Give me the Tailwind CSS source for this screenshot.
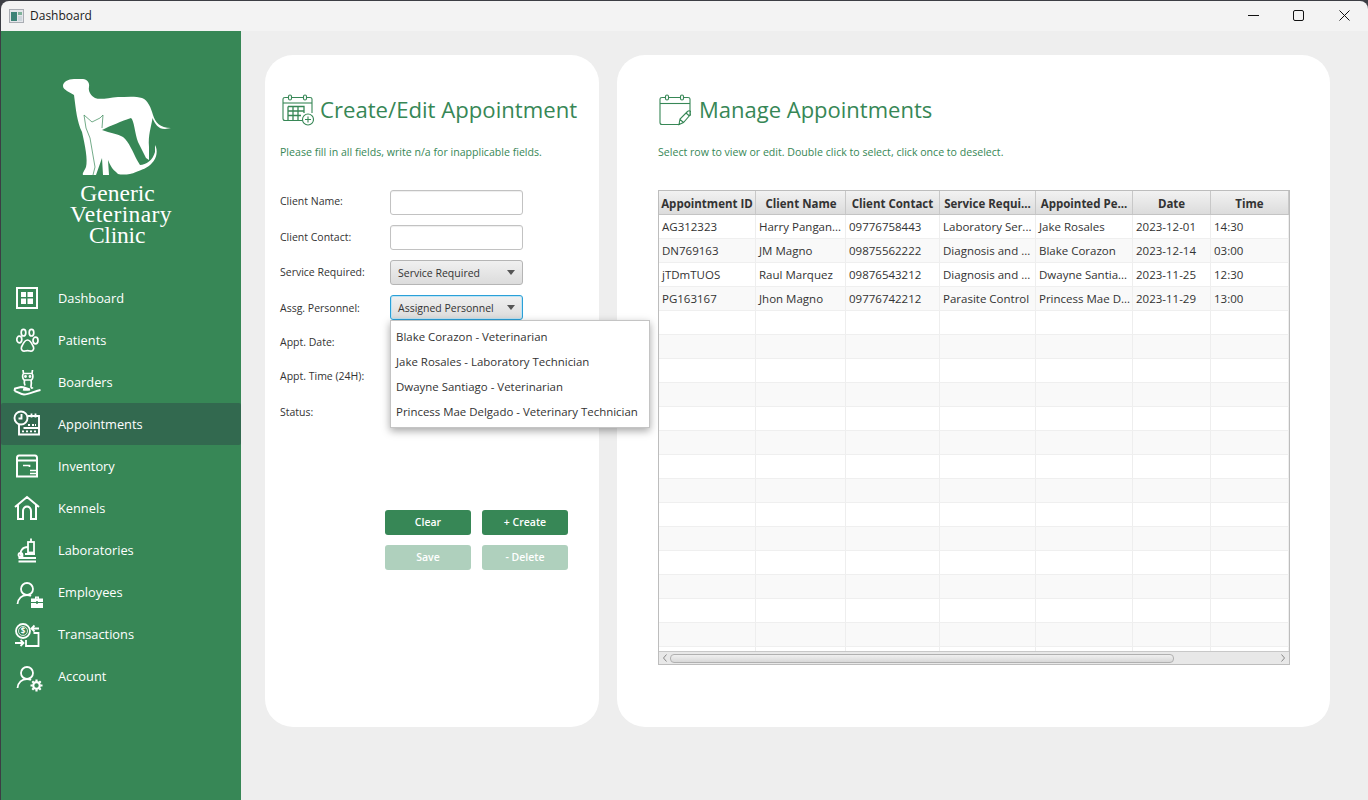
<!DOCTYPE html>
<html>
<head>
<meta charset="utf-8">
<title>Dashboard</title>
<script src="https://cdn.jsdelivr.net/npm/@tailwindcss/browser@4"></script>
</head>
<body class="w-[1368px] h-[800px] overflow-hidden bg-[#3c3e44] font-['Open_Sans',sans-serif]">
<div class="h-[800px] pt-px pl-px flex flex-col">
  <header class="h-[30px] shrink-0 bg-[#f3f3f3] rounded-tl-lg rounded-tr-lg flex items-center text-[12px] text-[#1a1a1a]">
    <svg class="ml-[8px] mr-[6px]" width="15" height="14" viewBox="0 0 15 14"><rect x=".5" y=".5" width="14" height="13" fill="#e4e6ea" stroke="#a9adb3"/><rect x="2" y="3" width="6" height="9" fill="#3d8377"/><rect x="9" y="3" width="4" height="3" fill="#7fb29a"/><rect x="9" y="7" width="4" height="5" fill="#cdd6dc"/></svg>
    <span>Dashboard</span>
    <div class="ml-auto flex items-center gap-[34px] pr-[18px] pb-[2px]">
      <svg width="11" height="11" viewBox="0 0 11 11"><path d="M0 5.500H11" stroke="#111" stroke-width="1"/></svg>
      <svg width="11" height="11" viewBox="0 0 11 11"><rect x=".5" y=".5" width="10" height="10" rx="1.500" fill="none" stroke="#111"/></svg>
      <svg width="11" height="11" viewBox="0 0 11 11" class="ml-px"><path d="M.5 .5L10.500 10.500M10.500 .5L.5 10.500" stroke="#111"/></svg>
    </div>
  </header>
  <div class="flex flex-1 min-h-0">
    <aside class="w-[240px] shrink-0 bg-[#378756] text-white">
      <div class="h-[246px] flex flex-col items-center relative">
        <svg class="mt-[47px] ml-[-6px]" width="112" height="100" viewBox="62 78 112 100">
          <path fill="#fff" d="M63 86C63 82 68 79 74 79L83 79C87 79 90 83 89 87C88 91 91 96 95 98C100 100 108 98 118 97C126 97 136 96 142 98C148 100 151 108 153 115C155 122 160 128 171 128L165 129C158 129 155 124 152.500 118C151 128 148 135 149 147L149 160L146 158L138 142C135 134 134 120 131 118C122 121 110 126 102 130C110 133 118 134 123 137C129 142 133 152 137 160L140 165C146 165 153 160 155 152L155 145C158 150 157 158 152 163C148 168 141 170 136 172C130 175 122 175 118 174L116 172C113 170 110 165 108 160L109 175L103 175L102 158L96 175L88 175L83 175C82 173 85 170 86 167C88 160 85 145 82 132C77 122 76 110 74 95C70 92 63 90 63 86Z"/>
          <path fill="none" stroke="#378756" stroke-width=".7" d="M84 115L92 122L100 118L103 115L102 128M84 115L86 128L90 138L95 167L93 175"/>
        </svg>
        <div class="font-['Liberation_Serif',serif] text-[23.500px] leading-[21px] text-center mt-[5px] font-light flex flex-col items-center">
          <span class="pr-[7px]">Generic</span>
          <span class="tracking-[0.4px]">Veterinary</span>
          <span class="pr-[8px] tracking-[-0.2px]">Clinic</span>
        </div>
      </div>
      <nav class="text-[12.800px] text-white">
        <a class="h-[42px] flex items-center gap-[13px] pl-[10px]">
          <svg class="shrink-0 overflow-visible" width="34" height="32" viewBox="0 0 34 32" fill="none" stroke="#fff" stroke-width="2"><rect x="6" y="6" width="20" height="20"/><path fill="#fff" stroke="none" d="M10 10H15V15H10ZM16.500 10H22V15H16.500ZM10 16.500H15V22H10ZM16.500 16.500H22V22H16.500Z"/></svg>
          <span class="mt-[2px]">Dashboard</span></a>
        <a class="h-[42px] flex items-center gap-[13px] pl-[10px]">
          <svg class="shrink-0 overflow-visible" width="34" height="32" viewBox="0 0 34 32" fill="none" stroke="#fff" stroke-width="1.700"><ellipse cx="12.500" cy="8.700" rx="2.300" ry="3.300"/><ellipse cx="20.500" cy="8.700" rx="2.300" ry="3.300"/><ellipse cx="8.300" cy="15.500" rx="2.500" ry="3.300"/><ellipse cx="24.500" cy="16.500" rx="2.500" ry="3.300"/><path d="M16.500 16C13.500 16 12 20 10.500 23C9.500 26 12 27.500 14 27C15.800 26.500 17.500 26.500 19 27C21 27.500 23.500 26 22.500 23C21 20 19.500 16 16.500 16Z"/></svg>
          <span class="mt-[2px]">Patients</span></a>
        <a class="h-[42px] flex items-center gap-[13px] pl-[10px]">
          <svg class="shrink-0 overflow-visible" width="34" height="32" viewBox="0 0 34 32" fill="none" stroke="#fff" stroke-width="1.700"><path d="M12 4L12.500 7.500H21L21.500 4M12.500 7.500C11 9 11.500 13 13 14H20.500C22 13 22.500 9 21 7.500M13.500 14C13 16 13.500 18 14 19.500M20 14C20.500 16 20.500 18 20 20.500C20 22 21 22.500 22 21.500"/><circle cx="14.500" cy="10.500" r=".6" fill="#fff"/><circle cx="19" cy="10.500" r=".6" fill="#fff"/><path stroke-width="2" d="M3.500 25L4 22.500L10 21C13 21 16 23 19 23.500C16 24 14 24 12 23.500M3.500 25C7 26 10 28.500 13 28.500C18 28.500 24 25 29.500 24"/></svg>
          <span class="mt-[2px]">Boarders</span></a>
        <a class="h-[42px] flex items-center gap-[13px] pl-[10px] bg-[#32694f] rounded-[2px]">
          <svg class="shrink-0 overflow-visible" width="34" height="32" viewBox="0 0 34 32" fill="none" stroke="#fff" stroke-width="1.900"><circle cx="10" cy="10" r="6.500"/><path d="M10.500 6V10.500H7.500"/><path d="M17 8H28V26.500H8V17M12.500 20H28"/><path stroke-width="1.800" d="M20.500 5.500V9.500M24.500 5.500V9.500"/><path fill="#fff" stroke="none" d="M11 22.500h2v1.800h-2zM15 22.500h2v1.800h-2zM19 22.500h2v1.800h-2zM23 22.500h2v1.800h-2zM23 18h-2v-2h2zM19 18h-2v-2h2zM25 18h-1v-2h1z"/></svg>
          <span class="mt-[2px]">Appointments</span></a>
        <a class="h-[42px] flex items-center gap-[13px] pl-[10px]">
          <svg class="shrink-0 overflow-visible" width="34" height="32" viewBox="0 0 34 32" fill="none" stroke="#fff" stroke-width="2"><path d="M6 26.500V8C6 6.500 7 5.500 8 5.500H24C25 5.500 26 6.500 26 8V26.500ZM6 10.500H26"/><path stroke-width="1.700" d="M12 15.500H18.500V17M19 20.500H25M19 23.500H25"/></svg>
          <span class="mt-[2px]">Inventory</span></a>
        <a class="h-[42px] flex items-center gap-[13px] pl-[10px]">
          <svg class="shrink-0 overflow-visible" width="34" height="32" viewBox="0 0 34 32" fill="none" stroke="#fff" stroke-width="2"><path d="M4 15L16 5L28 15M7 13V27H12V19C12 16 14 14.500 16 14.500C18 14.500 20 16 20 19V27H25V13"/></svg>
          <span class="mt-[2px]">Kennels</span></a>
        <a class="h-[42px] flex items-center gap-[13px] pl-[10px]">
          <svg class="shrink-0 overflow-visible" width="34" height="32" viewBox="0 0 34 32" fill="none" stroke="#fff" stroke-width="1.800"><path d="M7.500 27.500H25M7.500 24H25M13 24C9.500 23 8.500 18 11 15.500C12.500 13.500 15 13 17 13M14 20H24"/><circle cx="9.500" cy="21" r="2"/><rect x="17" y="8" width="6" height="10.500"/><path d="M20 8V4.500"/></svg>
          <span class="mt-[2px]">Laboratories</span></a>
        <a class="h-[42px] flex items-center gap-[13px] pl-[10px]">
          <svg class="shrink-0 overflow-visible" width="34" height="32" viewBox="0 0 34 32" fill="none" stroke="#fff" stroke-width="1.800"><circle cx="16" cy="13" r="6"/><path d="M6.500 28C7 22.500 11 19 16 19C17.500 19 19 19.300 20 20"/><path fill="#fff" stroke="none" d="M20 22.500H24V20.500H28V22.500H32V32H20ZM25.500 22.500H26.500V21.800H25.500Z"/><path stroke="#378756" stroke-width="1" d="M20 26.500H25M27 26.500H32M25.500 25.500H26.500V27.500H25.500Z"/></svg>
          <span class="mt-[2px]">Employees</span></a>
        <a class="h-[42px] flex items-center gap-[13px] pl-[10px]">
          <svg class="shrink-0 overflow-visible" width="34" height="32" viewBox="0 0 34 32" fill="none" stroke="#fff" stroke-width="1.800"><circle cx="12" cy="13" r="7"/><circle cx="12" cy="13" r="4.500" stroke-width=".8"/><text x="12" y="16" font-size="8" font-weight="700" text-anchor="middle" fill="#fff" stroke="none" font-family="Open Sans">$</text><path d="M21 10.500H28M23.500 7.500L20.500 10.500L23.500 13.500"/><path d="M4 25H12M9.500 22L12.500 25L9.500 28"/><path d="M15 22V28H27.500V15H22.500"/></svg>
          <span class="mt-[2px]">Transactions</span></a>
        <a class="h-[42px] flex items-center gap-[13px] pl-[10px]">
          <svg class="shrink-0 overflow-visible" width="34" height="32" viewBox="0 0 34 32" fill="none" stroke="#fff" stroke-width="1.800"><circle cx="16" cy="13" r="6"/><path d="M6.500 28C7 22.500 11 19 16 19C17.500 19 19 19.300 20 20"/><circle cx="25.500" cy="25.500" r="3.300" stroke-width="2.200"/><path stroke-width="2.200" d="M25.500 19.500V21.500M25.500 29.500V31.500M19.500 25.500H21.500M29.500 25.500H31.500M21.300 21.300L22.700 22.700M28.300 28.300L29.700 29.700M29.700 21.300L28.300 22.700M22.700 28.300L21.300 29.700"/></svg>
          <span class="mt-[2px]">Account</span></a>
      </nav>
    </aside>
    <main class="flex-1 bg-[#eeeeee] pt-[24px] pl-[24px] flex gap-[18px] items-start">
      <section class="relative w-[334px] h-[672px] bg-white rounded-[28px] pl-[15px]">
        <div class="flex items-center h-[32px] mt-[39px] pl-[2px]">
          <svg width="32" height="32" viewBox="0 0 32 32" fill="none" stroke="#378756" stroke-width="1.100"><path d="M24 26.500H3C2 26.500 1 25.500 1 24.500V5C1 4 2 3.500 3 3.500H28C29.500 3.500 30 4 30 5V19"/><path d="M1 9H30"/><rect x="6.500" y="1" width="3" height="5" rx="1.500" fill="#fff"/><rect x="21.500" y="1" width="3" height="5" rx="1.500" fill="#fff"/><path stroke-width="1.300" d="M6 12.500H22V19M6 17H22M6 21.500H19M6 12.500V26M11 12.500V26M16 12.500V26"/><circle cx="26" cy="25.500" r="5.500" fill="#fff"/><path d="M26 22.500V28.500M23 25.500H29"/></svg>
          <h1 class="text-[22.150px] text-[#378756] ml-[6px] leading-none -mt-[2px]">Create/Edit Appointment</h1>
        </div>
        <p class="text-[10.600px] text-[#378756] mt-[19px] leading-[14px]">Please fill in all fields, write n/a for inapplicable fields.</p>
        <form class="mt-[31px] flex flex-col gap-[10px] text-[10.500px] text-[#333]">
          <div class="flex items-center h-[25px]"><label class="w-[110px] -mt-px">Client Name:</label><div class="w-[133px] h-[25px] rounded-[3px] border border-[#c2c2c2] bg-white shadow-[inset_0_1px_1px_#eee]"></div></div>
          <div class="flex items-center h-[25px]"><label class="w-[110px]">Client Contact:</label><div class="w-[133px] h-[25px] rounded-[3px] border border-[#c2c2c2] bg-white shadow-[inset_0_1px_1px_#eee]"></div></div>
          <div class="flex items-center h-[25px]"><label class="w-[110px]">Service Required:</label><div class="w-[133px] h-[25px] rounded-[3px] border border-[#b5b5b5] bg-gradient-to-b from-[#f0f0f0] to-[#dcdcdc] flex items-center pl-[7px] pr-[7px] justify-between"><span class="mt-[2px]">Service Required</span><span class="border-t-[5px] border-t-[#555] border-x-[4.500px] border-x-transparent"></span></div></div>
          <div class="flex items-center h-[25px]"><label class="w-[110px] mt-[2px]">Assg. Personnel:</label><div class="w-[133px] h-[25px] rounded-[3px] border border-[#2aa0d8] shadow-[inset_0_0_0_1px_#bfe3f3] bg-gradient-to-b from-[#f0f0f0] to-[#dcdcdc] flex items-center pl-[7px] pr-[7px] justify-between"><span class="mt-[2px]">Assigned Personnel</span><span class="border-t-[5px] border-t-[#555] border-x-[4.500px] border-x-transparent"></span></div></div>
          <div class="flex items-center h-[25px]"><label class="w-[110px]">Appt. Date:</label></div>
          <div class="flex items-center h-[25px]"><label class="w-[110px] -mt-[2px]">Appt. Time (24H):</label></div>
          <div class="flex items-center h-[25px]"><label class="w-[110px]">Status:</label></div>
        </form>
        <div class="ml-[105px] mt-[85px] grid grid-cols-[86px_86px] gap-x-[11px] gap-y-[10px] text-[10.500px] font-semibold text-white">
          <button class="h-[25px] rounded-[3px] bg-[#378756]">Clear</button>
          <button class="h-[25px] rounded-[3px] bg-[#378756]">+ Create</button>
          <button class="h-[25px] rounded-[3px] bg-[#afd0bd]">Save</button>
          <button class="h-[25px] rounded-[3px] bg-[#afd0bd]">- Delete</button>
        </div>
        <ul class="absolute left-[125px] top-[265px] w-[260px] h-[108px] bg-white border border-[#c4c4c4] shadow-[0_3px_8px_rgba(0,0,0,0.35)] pt-[3px] text-[11.450px] text-[#333] z-10">
          <li class="h-[25px] leading-[25px] pl-[5px]">Blake Corazon - Veterinarian</li>
          <li class="h-[25px] leading-[25px] pl-[5px]">Jake Rosales - Laboratory Technician</li>
          <li class="h-[25px] leading-[25px] pl-[5px]">Dwayne Santiago - Veterinarian</li>
          <li class="h-[25px] leading-[25px] pl-[5px]">Princess Mae Delgado - Veterinary Technician</li>
        </ul>
      </section>
      <section class="w-[713px] h-[672px] bg-white rounded-[28px] pl-[41px]">
        <div class="flex items-center h-[32px] mt-[39px] pl-px">
          <svg width="32" height="32" viewBox="0 0 32 32" fill="none" stroke="#378756" stroke-width="1.100"><path d="M21 30.500H3C2 30.500 1 29.500 1 28.500V5C1 4 2 3.500 3 3.500H29C30 3.500 31 4 31 5V22"/><path d="M1 9.500H31"/><rect x="6.500" y="1" width="3" height="5" rx="1.500" fill="#fff"/><rect x="21.500" y="1" width="3" height="5" rx="1.500" fill="#fff"/><path d="M20 30.500L21 25L28.500 17.500C29.500 16.500 31 16.500 31.500 17.500C32.500 18.500 32 19.500 31.500 20.500L24.500 28.500ZM27 19L30.500 22M21 25.500L24.500 28.500"/></svg>
          <h1 class="text-[22px] text-[#378756] ml-[8px] leading-none -mt-[2px]">Manage Appointments</h1>
        </div>
        <p class="text-[10.600px] text-[#378756] mt-[19px] leading-[14px]">Select row to view or edit. Double click to select, click once to deselect.</p>
        <div class="mt-[31px] w-[632px] h-[475px] border border-[#bdbdbd] flex flex-col text-[11.500px] text-[#333]">
          <div class="h-[24px] shrink-0 flex bg-gradient-to-b from-[#f2f2f2] to-[#dcdcdc] border-b border-[#c4c4c4] font-bold text-[#333] leading-[26px] text-center">
            <div class="w-[97px] shrink-0 border-r border-[#c8c8c8] whitespace-nowrap overflow-hidden">Appointment ID</div>
            <div class="w-[90px] shrink-0 border-r border-[#c8c8c8] pl-px">Client Name</div>
            <div class="w-[94px] shrink-0 border-r border-[#c8c8c8]">Client Contact</div>
            <div class="w-[96px] shrink-0 border-r border-[#c8c8c8] whitespace-nowrap">Service Requi...</div>
            <div class="w-[97px] shrink-0 border-r border-[#c8c8c8] whitespace-nowrap">Appointed Pe...</div>
            <div class="w-[78px] shrink-0 border-r border-[#c8c8c8]">Date</div>
            <div class="w-[78px] shrink-0 border-r border-[#c8c8c8]">Time</div>
          </div>
          <div class="flex-1 min-h-0 overflow-hidden [&>div]:h-[24px] [&>div]:flex [&>div]:border-b [&>div]:border-[#efefef] [&>div]:leading-[23px] [&>div>div]:shrink-0 [&>div>div]:border-r [&>div>div]:border-[#eeeeee] [&>div>div]:pl-[3px] [&>div>div]:whitespace-nowrap [&>div>div]:overflow-hidden [&>div:nth-child(even)]:bg-[#f9f9f9]">
            <div><div class="w-[97px]">AG312323</div><div class="w-[90px]">Harry Pangan...</div><div class="w-[94px]">09776758443</div><div class="w-[96px]">Laboratory Ser...</div><div class="w-[97px]">Jake Rosales</div><div class="w-[78px]">2023-12-01</div><div class="w-[78px]">14:30</div></div>
            <div><div class="w-[97px]">DN769163</div><div class="w-[90px]">JM Magno</div><div class="w-[94px]">09875562222</div><div class="w-[96px]">Diagnosis and ...</div><div class="w-[97px]">Blake Corazon</div><div class="w-[78px]">2023-12-14</div><div class="w-[78px]">03:00</div></div>
            <div><div class="w-[97px]">jTDmTUOS</div><div class="w-[90px]">Raul Marquez</div><div class="w-[94px]">09876543212</div><div class="w-[96px]">Diagnosis and ...</div><div class="w-[97px]">Dwayne Santia...</div><div class="w-[78px]">2023-11-25</div><div class="w-[78px]">12:30</div></div>
            <div><div class="w-[97px]">PG163167</div><div class="w-[90px]">Jhon Magno</div><div class="w-[94px]">09776742212</div><div class="w-[96px]">Parasite Control</div><div class="w-[97px]">Princess Mae D...</div><div class="w-[78px]">2023-11-29</div><div class="w-[78px]">13:00</div></div>
            <div><div class="w-[97px]"></div><div class="w-[90px]"></div><div class="w-[94px]"></div><div class="w-[96px]"></div><div class="w-[97px]"></div><div class="w-[78px]"></div><div class="w-[78px]"></div></div>
            <div><div class="w-[97px]"></div><div class="w-[90px]"></div><div class="w-[94px]"></div><div class="w-[96px]"></div><div class="w-[97px]"></div><div class="w-[78px]"></div><div class="w-[78px]"></div></div>
            <div><div class="w-[97px]"></div><div class="w-[90px]"></div><div class="w-[94px]"></div><div class="w-[96px]"></div><div class="w-[97px]"></div><div class="w-[78px]"></div><div class="w-[78px]"></div></div>
            <div><div class="w-[97px]"></div><div class="w-[90px]"></div><div class="w-[94px]"></div><div class="w-[96px]"></div><div class="w-[97px]"></div><div class="w-[78px]"></div><div class="w-[78px]"></div></div>
            <div><div class="w-[97px]"></div><div class="w-[90px]"></div><div class="w-[94px]"></div><div class="w-[96px]"></div><div class="w-[97px]"></div><div class="w-[78px]"></div><div class="w-[78px]"></div></div>
            <div><div class="w-[97px]"></div><div class="w-[90px]"></div><div class="w-[94px]"></div><div class="w-[96px]"></div><div class="w-[97px]"></div><div class="w-[78px]"></div><div class="w-[78px]"></div></div>
            <div><div class="w-[97px]"></div><div class="w-[90px]"></div><div class="w-[94px]"></div><div class="w-[96px]"></div><div class="w-[97px]"></div><div class="w-[78px]"></div><div class="w-[78px]"></div></div>
            <div><div class="w-[97px]"></div><div class="w-[90px]"></div><div class="w-[94px]"></div><div class="w-[96px]"></div><div class="w-[97px]"></div><div class="w-[78px]"></div><div class="w-[78px]"></div></div>
            <div><div class="w-[97px]"></div><div class="w-[90px]"></div><div class="w-[94px]"></div><div class="w-[96px]"></div><div class="w-[97px]"></div><div class="w-[78px]"></div><div class="w-[78px]"></div></div>
            <div><div class="w-[97px]"></div><div class="w-[90px]"></div><div class="w-[94px]"></div><div class="w-[96px]"></div><div class="w-[97px]"></div><div class="w-[78px]"></div><div class="w-[78px]"></div></div>
            <div><div class="w-[97px]"></div><div class="w-[90px]"></div><div class="w-[94px]"></div><div class="w-[96px]"></div><div class="w-[97px]"></div><div class="w-[78px]"></div><div class="w-[78px]"></div></div>
            <div><div class="w-[97px]"></div><div class="w-[90px]"></div><div class="w-[94px]"></div><div class="w-[96px]"></div><div class="w-[97px]"></div><div class="w-[78px]"></div><div class="w-[78px]"></div></div>
            <div><div class="w-[97px]"></div><div class="w-[90px]"></div><div class="w-[94px]"></div><div class="w-[96px]"></div><div class="w-[97px]"></div><div class="w-[78px]"></div><div class="w-[78px]"></div></div>
            <div><div class="w-[97px]"></div><div class="w-[90px]"></div><div class="w-[94px]"></div><div class="w-[96px]"></div><div class="w-[97px]"></div><div class="w-[78px]"></div><div class="w-[78px]"></div></div>
            <div><div class="w-[97px]"></div><div class="w-[90px]"></div><div class="w-[94px]"></div><div class="w-[96px]"></div><div class="w-[97px]"></div><div class="w-[78px]"></div><div class="w-[78px]"></div></div>
          </div>
          <div class="h-[13px] shrink-0 border-t border-[#c8c8c8] bg-[#e8e8e8] flex items-center pl-[3px] pr-[3px]">
            <svg width="6" height="8" viewBox="0 0 6 8"><path d="M4.500 .5L1.500 4L4.500 7.500" fill="none" stroke="#888"/></svg>
            <div class="w-[504px] h-[9px] ml-[2px] rounded-[4px] border border-[#b0b0b0] bg-gradient-to-b from-[#f0f0f0] to-[#d8d8d8]"></div>
            <svg class="ml-auto" width="6" height="8" viewBox="0 0 6 8"><path d="M1.500 .5L4.500 4L1.500 7.500" fill="none" stroke="#888"/></svg>
          </div>
        </div>
      </section>
    </main>
  </div>
</div>
</body>
</html>
